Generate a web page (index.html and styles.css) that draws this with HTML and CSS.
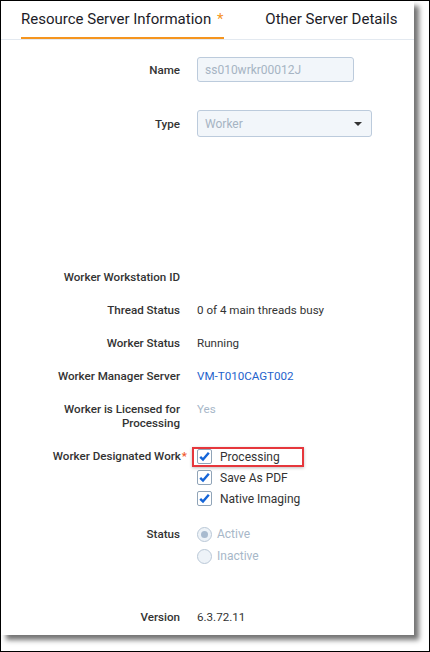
FILE: index.html
```html
<!DOCTYPE html>
<html lang="en">
<head>
  <meta charset="UTF-8" />
  <meta name="viewport" content="width=device-width, initial-scale=1" />
  <title>Resource Server</title>
  <link rel="stylesheet" href="styles.css">
</head>
<body>
  <div class="panel">
    <div class="tabs">
      <div class="tab active">Resource Server Information <span class="req">*</span></div>
      <div class="tab">Other Server Details</div>
    </div>

    <div class="form">
      <div class="row row-field">
        <div class="label">Name</div>
        <div class="value"><input class="field" type="text" value="ss010wrkr00012J" readonly /></div>
      </div>

      <div class="row row-field row-type">
        <div class="label">Type</div>
        <div class="value">
          <div class="select">
            <span>Worker</span>
            <span class="caret"></span>
          </div>
        </div>
      </div>

      <div class="row row-worker">
        <div class="label">Worker Workstation ID</div>
        <div class="value"></div>
      </div>

      <div class="row">
        <div class="label">Thread Status</div>
        <div class="value">0 of 4 main threads busy</div>
      </div>

      <div class="row">
        <div class="label">Worker Status</div>
        <div class="value">Running</div>
      </div>

      <div class="row">
        <div class="label">Worker Manager Server</div>
        <div class="value"><a class="link" href="#">VM-T010CAGT002</a></div>
      </div>

      <div class="row">
        <div class="label">Worker is Licensed for<br>Processing</div>
        <div class="value muted">Yes</div>
      </div>

      <div class="row row-work">
        <div class="label tall">Worker Designated Work<span class="star">*</span></div>
        <div class="value checks">
          <label class="check-item"><span class="box"><svg width="13" height="13" viewBox="0 0 13 13"><path d="M2.2 6.8 L5 9.6 L10.8 2.8" fill="none" stroke="#1565d8" stroke-width="2.4" /></svg></span>Processing</label>
          <label class="check-item"><span class="box"><svg width="13" height="13" viewBox="0 0 13 13"><path d="M2.2 6.8 L5 9.6 L10.8 2.8" fill="none" stroke="#1565d8" stroke-width="2.4" /></svg></span>Save As PDF</label>
          <label class="check-item"><span class="box"><svg width="13" height="13" viewBox="0 0 13 13"><path d="M2.2 6.8 L5 9.6 L10.8 2.8" fill="none" stroke="#1565d8" stroke-width="2.4" /></svg></span>Native Imaging</label>
          <div class="highlight"></div>
        </div>
      </div>

      <div class="row row-status">
        <div class="label radio-label">Status</div>
        <div class="value">
          <div class="radio-item"><span class="radio on"></span>Active</div>
          <div class="radio-item"><span class="radio"></span>Inactive</div>
        </div>
      </div>

      <div class="row row-version">
        <div class="label">Version</div>
        <div class="value">6.3.72.11</div>
      </div>
    </div>
  </div>
</body>
</html>
```

FILE: styles.css
```css
* {
  box-sizing: border-box;
}

html {
  margin: 0;
}

body {
  margin: 0;
  width: 430px;
  height: 652px;
  border: 1px solid #000;
  background: #fff;
  font-family: Roboto, "Liberation Sans", Arial, sans-serif;
  font-size: 11.6px;
  color: #333;
  overflow: hidden;
}

.panel {
  width: 413px;
  height: 634px;
  background: #fff;
  box-shadow: 5px 5px 5px rgba(0, 0, 0, 0.55);
}

/* Tabs */
.tabs {
  display: flex;
  gap: 41px;
  padding-left: 20px;
  height: 39px;
  border-bottom: 1px solid #e3e9f0;
}

.tab {
  height: 38px;
  line-height: 36px;
  font-size: 15px;
  color: #1c1c28;
  border-bottom: 2px solid transparent;
  white-space: nowrap;
}

.tab.active {
  border-bottom-color: #f5951f;
  padding-right: 1px;
}

.req {
  color: #f5951f;
  margin-left: 2px;
}

/* Form rows */
.form {
  padding-top: 17px;
}

.row {
  display: grid;
  grid-template-columns: 179px 1fr;
  column-gap: 17px;
  align-items: start;
  line-height: 14px;
  margin-top: 19px;
}

.row-field {
  align-items: center;
  margin-top: 0;
}

.row-type {
  margin-top: 28px;
}

.row-worker {
  margin-top: 133px;
}

.row-work {
  margin-top: 16px;
}

.row-status {
  margin-top: 14px;
}

.row-version {
  margin-top: 43px;
}

.label {
  text-align: right;
  font-weight: 500;
  color: #333;
}

.label.tall {
  line-height: 21px;
}

.radio-label {
  line-height: 22px;
}

.star {
  color: #f0572c;
  margin-left: 1px;
  margin-right: -7px;
}

.value {
  color: #333;
}

.muted {
  color: #a7b7c8;
}

.link {
  color: #1f63cc;
  text-decoration: none;
}

/* Inputs */
.field {
  display: block;
  width: 157px;
  height: 25px;
  padding: 0 7px;
  border: 1px solid #bccbdc;
  border-radius: 3px;
  background: #f2f6fa;
  color: #a6b4c3;
  font-family: Roboto, "Liberation Sans", Arial, sans-serif;
  font-size: 12px;
  outline: none;
}

.select {
  display: flex;
  align-items: center;
  justify-content: space-between;
  width: 175px;
  height: 27px;
  padding: 0 9px 0 7px;
  border: 1px solid #bccbdc;
  border-radius: 3px;
  background: #f2f6fa;
  color: #a6b4c3;
  font-size: 12px;
}

.caret {
  width: 0;
  height: 0;
  border-left: 4px solid transparent;
  border-right: 4px solid transparent;
  border-top: 4px solid #333;
}

/* Checkboxes */
.checks {
  position: relative;
}

.check-item {
  display: flex;
  align-items: center;
  gap: 8px;
  height: 21px;
  font-size: 12px;
}

.box {
  width: 15px;
  height: 15px;
  border: 1px solid #90a4b8;
  border-radius: 2px;
  background: #fff;
  display: flex;
  align-items: center;
  justify-content: center;
}

.highlight {
  position: absolute;
  left: -5px;
  top: 1px;
  width: 112px;
  height: 20px;
  border: 2px solid #e6373c;
  box-shadow: 0 1px 3px rgba(0, 0, 0, 0.25);
}

/* Radios */
.radio-item {
  display: flex;
  align-items: center;
  gap: 5px;
  height: 22px;
  color: #a7b7c8;
  font-size: 12px;
}

.radio {
  width: 15px;
  height: 15px;
  border: 1px solid #bac8d7;
  border-radius: 50%;
  background: #eef3f8;
  display: flex;
  align-items: center;
  justify-content: center;
}

.radio.on::after {
  content: "";
  width: 7px;
  height: 7px;
  border-radius: 50%;
  background: #a9bbcf;
}
```
